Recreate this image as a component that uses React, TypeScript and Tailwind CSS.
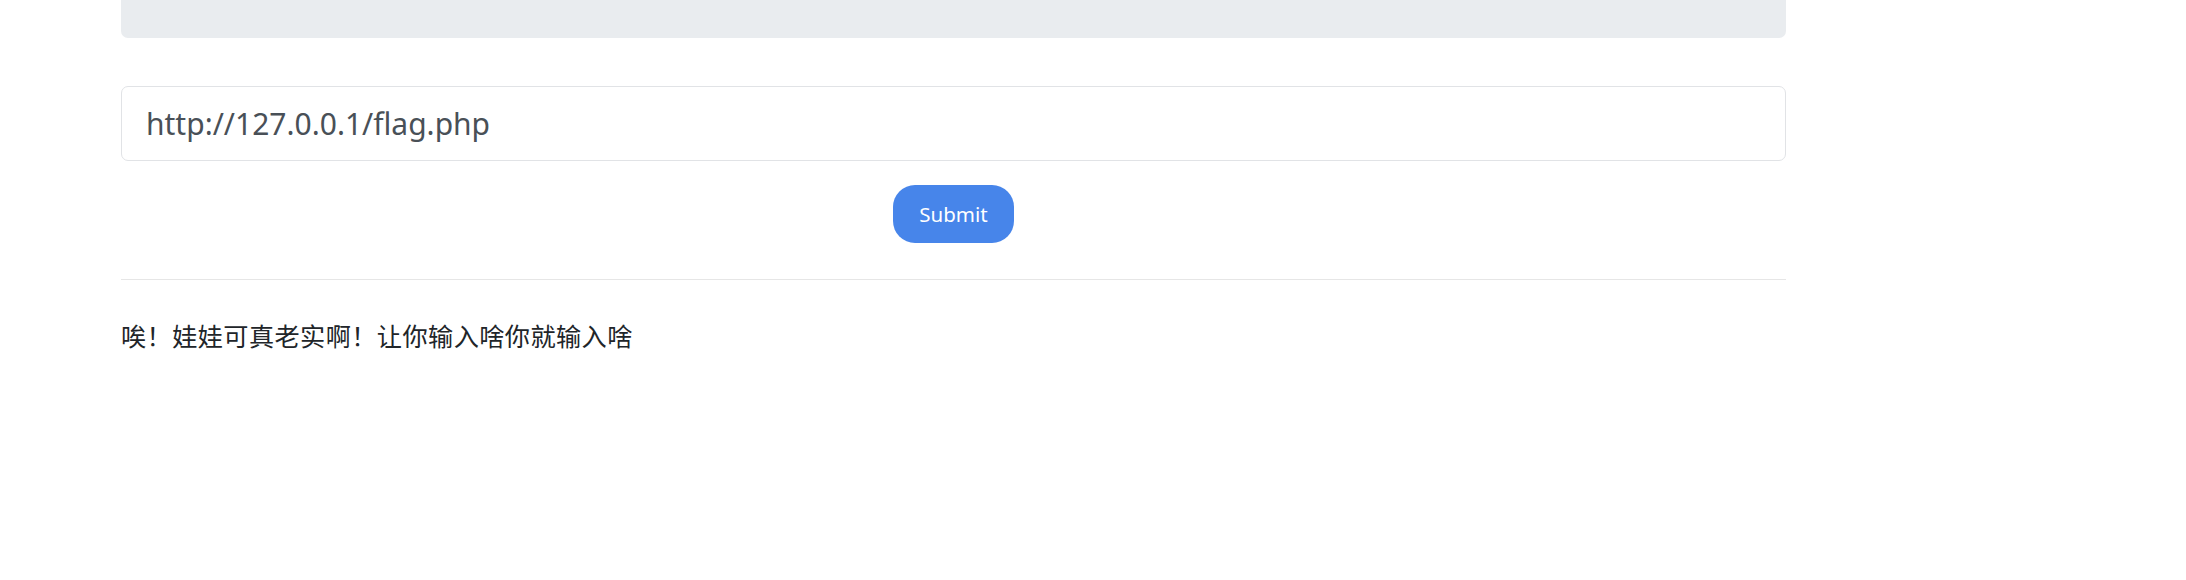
import React from "react";

export default function App() {
  return (
    <div className="w-[2186px] h-[580px] bg-white" style={{ fontFamily: '"Noto Sans", "Noto Sans CJK SC", sans-serif' }}>
      <div className="ml-[121px] w-[1665px]">
        <div className="h-[38px] bg-[#e9ecef] rounded-b-[7px]" />
        <div className="mt-[48px] h-[75px] border border-[#e1e3e6] rounded-[7px] flex items-center px-[24px]">
          <span className="text-[30px] text-[#495057]">http://127.0.0.1/flag.php</span>
        </div>
        <div className="mt-[24px] flex justify-center">
          <button className="w-[121px] h-[58px] rounded-[22px] bg-[#4785ea] text-white text-[20.5px] flex items-center justify-center">
            Submit
          </button>
        </div>
        <div className="mt-[36px] h-px bg-[#e6e6e6]" />
        <div className="mt-[37px] text-[25.2px] leading-[37.8px] tracking-[0.4px] text-[#212529]" style={{ fontFamily: '"Noto Sans CJK SC", sans-serif' }}>
          唉！娃娃可真老实啊！让你输入啥你就输入啥
        </div>
      </div>
    </div>
  );
}
